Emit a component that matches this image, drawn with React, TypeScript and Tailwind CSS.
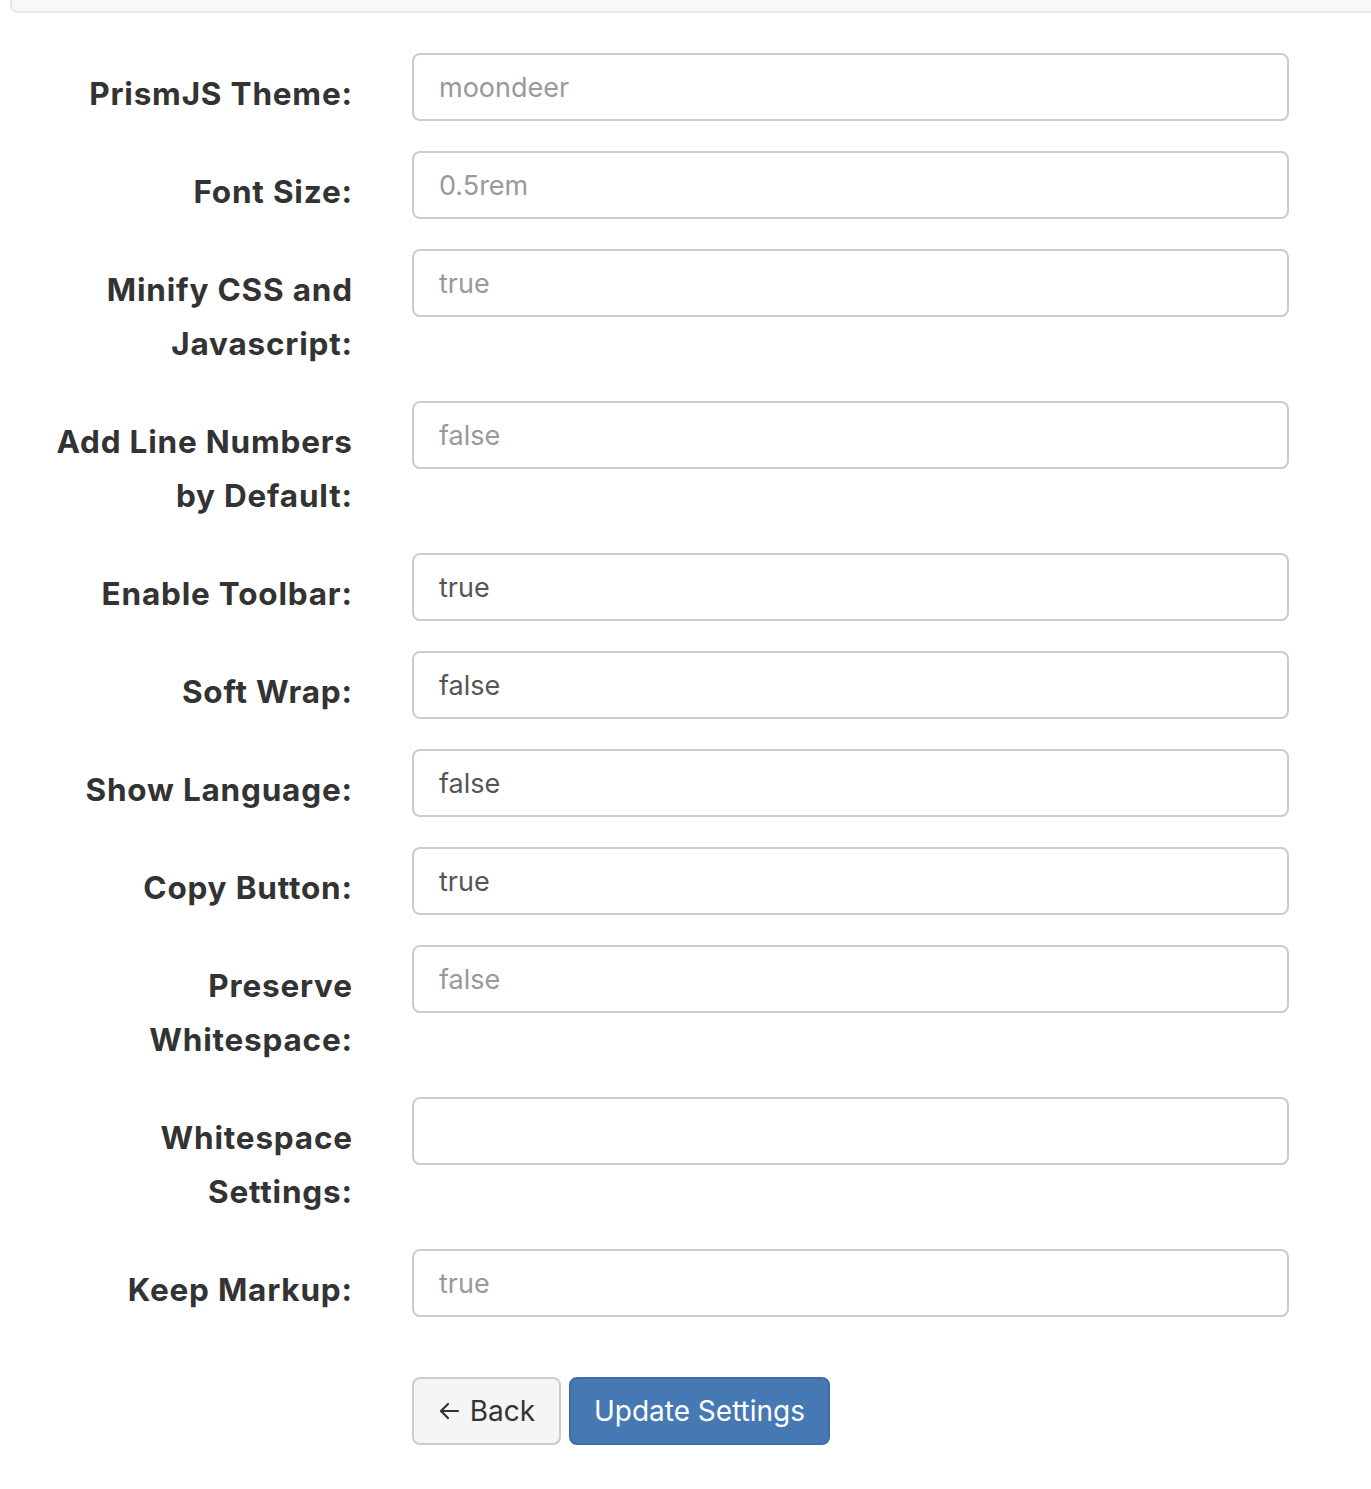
import React from 'react';

type Field = {
  label: string[];
  value: string;
  placeholder?: boolean;
};

const fields: Field[] = [
  { label: ['PrismJS Theme:'], value: 'moondeer', placeholder: true },
  { label: ['Font Size:'], value: '0.5rem', placeholder: true },
  { label: ['Minify CSS and', 'Javascript:'], value: 'true', placeholder: true },
  { label: ['Add Line Numbers', 'by Default:'], value: 'false', placeholder: true },
  { label: ['Enable Toolbar:'], value: 'true' },
  { label: ['Soft Wrap:'], value: 'false' },
  { label: ['Show Language:'], value: 'false' },
  { label: ['Copy Button:'], value: 'true' },
  { label: ['Preserve', 'Whitespace:'], value: 'false', placeholder: true },
  { label: ['Whitespace', 'Settings:'], value: '' },
  { label: ['Keep Markup:'], value: 'true', placeholder: true },
];

const FormRow: React.FC<{ field: Field }> = ({ field }) => (
  <div className="flex items-start mb-[30px]">
    <label className="w-[352px] shrink-0 pt-[14px] text-right text-[31.5px] leading-[54px] font-bold text-[#333] tracking-[0.8px]">
      {field.label.map((line) => (
        <div key={line} className="-mr-[0.8px]">{line}</div>
      ))}
    </label>
    <div className="ml-[60px] w-[877px] h-[68px] rounded-[8px] border-2 border-[#cccccc] bg-white px-[25px] flex items-center">
      <span
        className={`text-[27px] leading-none ${field.placeholder ? 'text-[#999999]' : 'text-[#555555]'}`}
      >
        {field.value}
      </span>
    </div>
  </div>
);

export default function App() {
  return (
    <div className="min-h-[1489px] bg-white font-['Inter','Liberation_Sans',sans-serif]">
      <div className="ml-[10px] h-[13px] bg-[#f8f8f8] border-b-2 border-l-2 border-[#e7e7e7] rounded-bl-[8px]" />
      <div className="pt-[40px]">
        {fields.map((field) => (
          <FormRow key={field.label.join(' ')} field={field} />
        ))}
        <div className="flex gap-[8px] ml-[412px] mt-[60px]">
          <button className="h-[68px] w-[149px] rounded-[8px] border-2 border-[#cccccc] bg-[#f5f5f5] text-[#333] text-[28px] flex items-center justify-center gap-[10px]">
            <svg width="22" height="22" viewBox="0 0 22 22" fill="none" stroke="#333" strokeWidth="2.2" strokeLinecap="round" strokeLinejoin="round">
              <path d="M20 11H3" />
              <path d="M10 4l-7 7 7 7" />
            </svg>
            Back
          </button>
          <button className="h-[68px] w-[261px] rounded-[8px] border-2 border-[#3c6da6] bg-[#4679b3] text-white text-[28px] flex items-center justify-center">
            Update Settings
          </button>
        </div>
      </div>
    </div>
  );
}
